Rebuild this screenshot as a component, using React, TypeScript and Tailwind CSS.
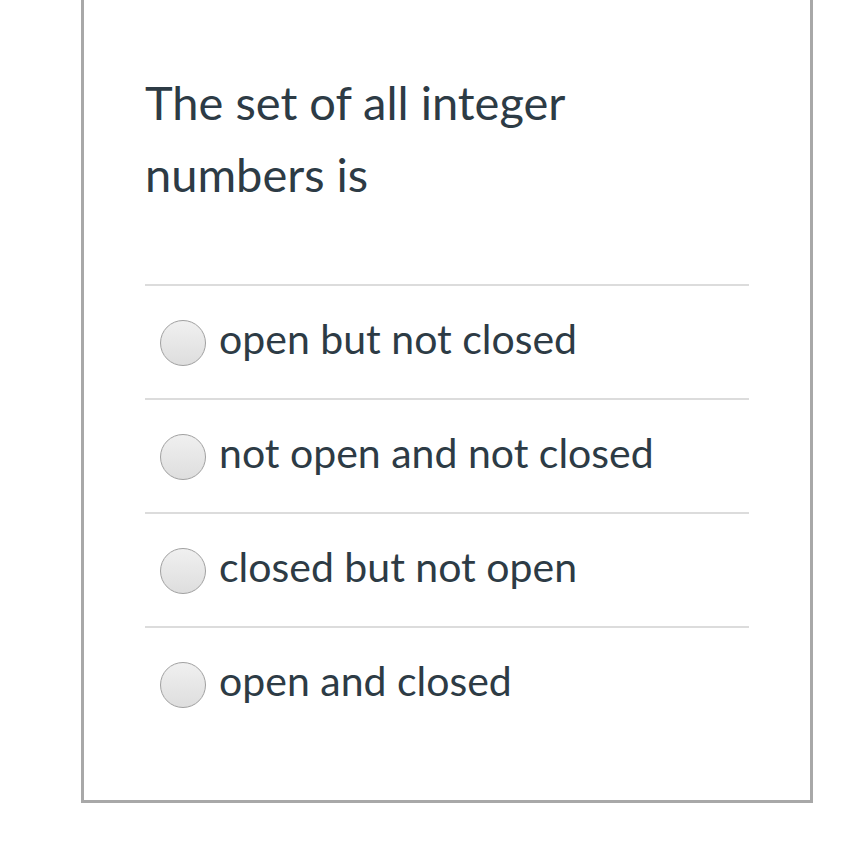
export default function App() {
  const options = [
    "open but not closed",
    "not open and not closed",
    "closed but not open",
    "open and closed",
  ];

  return (
    <div className="min-h-[864px] w-[864px] bg-white" style={{ fontFamily: "Lato, 'Noto Sans', sans-serif" }}>
      <div className="ml-[81px] w-[732px] border-x-[3px] border-b-[3px] border-[#a8a8a8] px-[61px] pb-[60px] pt-[66px]">
        <p className="text-[47px] leading-[72px] text-[#2d3b45]">
          The set of all integer
          <br />
          numbers is
        </p>
        <div className="mt-[74px]">
          {options.map((opt) => (
            <label key={opt} className="flex h-[114px] items-center border-t-2 border-[#dcdcdc] pl-[15px]">
              <span className="mr-[13px] mt-[2px] h-[46px] w-[46px] shrink-0 rounded-full border border-[#a0a0a0] bg-gradient-to-b from-[#f0f0f0] to-[#dedede]" />
              <span className="-mt-[6px] text-[41px] leading-[48px] text-[#2d3b45]">{opt}</span>
            </label>
          ))}
        </div>
      </div>
    </div>
  );
}
